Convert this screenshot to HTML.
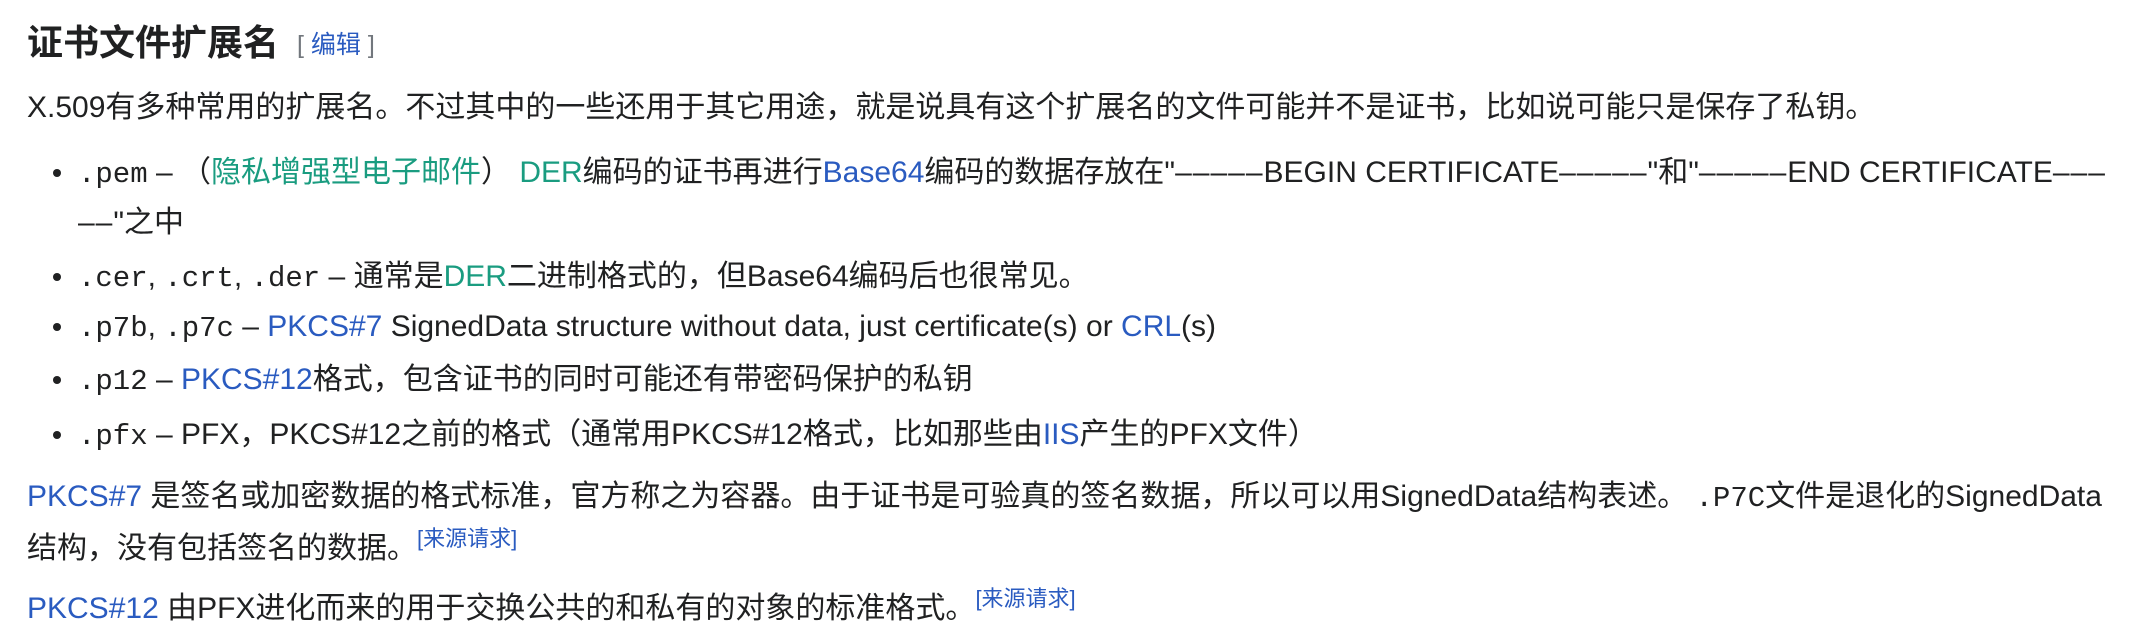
<!DOCTYPE html>
<html><head><meta charset="utf-8"><style>
body{margin:0;width:2146px;height:644px;background:#fff;overflow:hidden;font-family:"Liberation Sans","Noto Sans CJK SC",sans-serif;color:#202122;}
.l{position:absolute;left:27px;height:44px;line-height:44px;font-size:30px;white-space:nowrap;}
.li{left:78px;}
.dot{position:absolute;left:-25px;top:18px;width:8px;height:8px;border-radius:50%;background:#202122;}
code{font-family:"Liberation Mono",monospace;font-size:29px;}
a{color:#2a5bc0;text-decoration:none}
a.g{color:#1a9c80}
.d{letter-spacing:1px}
sup{font-size:22px;vertical-align:12px;line-height:0}
h{font-weight:bold;font-size:36px;}
.ed{font-size:25px;color:#72777d;margin-left:18px;position:relative;top:-2px}
</style></head><body>
<div class="l" style="top:21px;height:44px"><h>证书文件扩展名</h><span class="ed">[ <a>编辑</a> ]</span></div>
<div class="l" style="top:86px">X.509有多种常用的扩展名。不过其中的一些还用于其它用途，就是说具有这个扩展名的文件可能并不是证书，比如说可能只是保存了私钥。</div>
<div class="l li" style="top:151px"><span class="dot"></span><code>.pem</code> – （<a class="g">隐私增强型电子邮件</a>） <a class="g">DER</a>编码的证书再进行<a>Base64</a>编码的数据存放在"<span class="d">–––––</span>BEGIN CERTIFICATE<span class="d">–––––</span>"和"<span class="d">–––––</span>END CERTIFICATE<span class="d">–––</span></div>
<div class="l li" style="top:201px"><span class="d">––</span>"之中</div>
<div class="l li" style="top:255px"><span class="dot"></span><code>.cer</code>, <code>.crt</code>, <code>.der</code> – 通常是<a class="g">DER</a>二进制格式的，但Base64编码后也很常见。</div>
<div class="l li" style="top:305px"><span class="dot"></span><code>.p7b</code>, <code>.p7c</code> – <a>PKCS#7</a> SignedData structure without data, just certificate(s) or <a>CRL</a>(s)</div>
<div class="l li" style="top:358px"><span class="dot"></span><code>.p12</code> – <a>PKCS#12</a>格式，包含证书的同时可能还有带密码保护的私钥</div>
<div class="l li" style="top:413px"><span class="dot"></span><code>.pfx</code> – PFX，PKCS#12之前的格式（通常用PKCS#12格式，比如那些由<a>IIS</a>产生的PFX文件）</div>
<div class="l" style="top:475px"><a>PKCS#7</a> 是签名或加密数据的格式标准，官方称之为容器。由于证书是可验真的签名数据，所以可以用SignedData结构表述。 <code>.P7C</code>文件是退化的SignedData</div>
<div class="l" style="top:527px">结构，没有包括签名的数据。<sup><a>[来源请求]</a></sup></div>
<div class="l" style="top:587px"><a>PKCS#12</a> 由PFX进化而来的用于交换公共的和私有的对象的标准格式。<sup><a>[来源请求]</a></sup></div>
</body></html>
